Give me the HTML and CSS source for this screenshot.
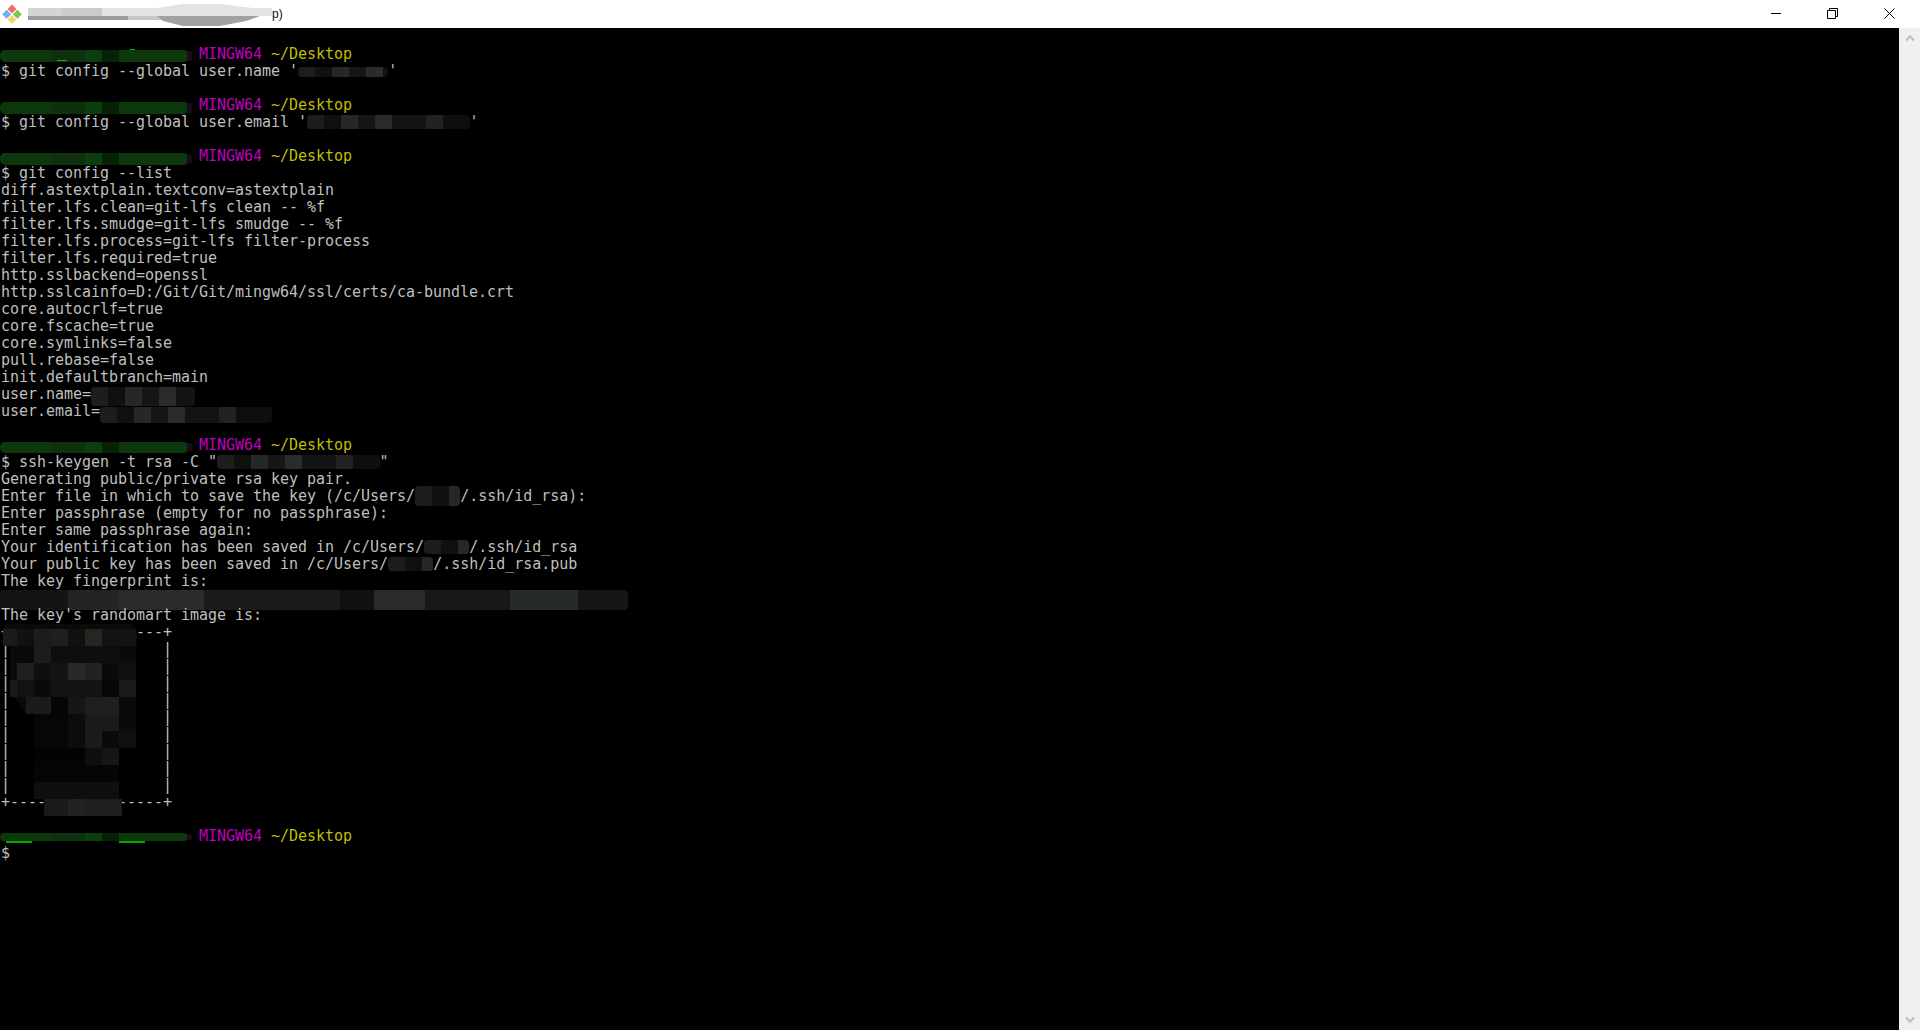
FILE: index.html
```html
<!DOCTYPE html>
<html lang="en">
<head>
<meta charset="utf-8">
<title>MINGW64</title>
<link rel="stylesheet" href="styles.css">
</head>
<body>
<div class="window">
  <header class="titlebar">
    <svg class="app-icon" viewBox="0 0 20 20" width="20" height="20">
      <path d="M10 0.5 L14.5 5 L10 9.5 L5.5 5Z" fill="#f26d6d"/>
      <path d="M4.7 5.8 L9.2 10.3 L4.7 14.8 L0.2 10.3Z" fill="#6fb1ea"/>
      <path d="M15.3 5.8 L19.8 10.3 L15.3 14.8 L10.8 10.3Z" fill="#74c655"/>
      <path d="M10 11 L14.5 15.5 L10 20 L5.5 15.5Z" fill="#f7d76a"/>
    </svg>
    <div class="title">
      <svg class="title-mask" viewBox="0 0 244 24" width="244" height="24">
        <path d="M0 6H129L155 2H192L225 6H244V14H0Z" fill="#e3e3e3"/>
        <path d="M0 6H34V14H0Z" fill="#d4d4d4"/><path d="M34 6H74V14H34Z" fill="#cccccc"/>
        <path d="M0 14H100V18H0Z" fill="#9c9c9c"/>
        <path d="M100 14H136V18H100Z" fill="#c6c6c6"/>
        <path d="M129 14H232L218 19L192 24H155L135 19Z" fill="#a2a2a2"/>
      </svg>
      <span>p)</span>
    </div>
    <div class="controls">
      <div class="ctl"><svg viewBox="0 0 10 10" width="10" height="10"><path d="M0 5.5H10" stroke="#000" fill="none"/></svg></div>
      <div class="ctl"><svg viewBox="0 0 11 11" width="11" height="11"><path d="M.5 2.5h8v8h-8zM2.5 2.5v-2h8v8h-2" stroke="#000" fill="none"/></svg></div>
      <div class="ctl"><svg viewBox="0 0 11 11" width="11" height="11"><path d="M.5.5l10 10M10.5.5l-10 10" stroke="#000" fill="none"/></svg></div>
    </div>
  </header>
  <div class="body">
    <main class="term">
      <div class="line"></div>
      <div class="line"><span class="mask-prompt p-a"></span><span class="mag">MINGW64</span> <span class="yel">~/Desktop</span></div>
      <div class="line">$ git config --global user.name '<span class="mask m-name"></span>'</div>
      <div class="line"></div>
      <div class="line"><span class="mask-prompt p-b"></span><span class="mag">MINGW64</span> <span class="yel">~/Desktop</span></div>
      <div class="line">$ git config --global user.email '<span class="mask m-email"></span>'</div>
      <div class="line"></div>
      <div class="line"><span class="mask-prompt p-b"></span><span class="mag">MINGW64</span> <span class="yel">~/Desktop</span></div>
      <div class="line">$ git config --list</div>
      <div class="line">diff.astextplain.textconv=astextplain</div>
      <div class="line">filter.lfs.clean=git-lfs clean -- %f</div>
      <div class="line">filter.lfs.smudge=git-lfs smudge -- %f</div>
      <div class="line">filter.lfs.process=git-lfs filter-process</div>
      <div class="line">filter.lfs.required=true</div>
      <div class="line">http.sslbackend=openssl</div>
      <div class="line">http.sslcainfo=D:/Git/Git/mingw64/ssl/certs/ca-bundle.crt</div>
      <div class="line">core.autocrlf=true</div>
      <div class="line">core.fscache=true</div>
      <div class="line">core.symlinks=false</div>
      <div class="line">pull.rebase=false</div>
      <div class="line">init.defaultbranch=main</div>
      <div class="line">user.name=<span class="mask m-uname"></span></div>
      <div class="line">user.email=<span class="mask m-uemail"></span></div>
      <div class="line"></div>
      <div class="line"><span class="mask-prompt p-c"></span><span class="mag">MINGW64</span> <span class="yel">~/Desktop</span></div>
      <div class="line">$ ssh-keygen -t rsa -C "<span class="mask m-mail2"></span>"</div>
      <div class="line">Generating public/private rsa key pair.</div>
      <div class="line">Enter file in which to save the key (/c/Users/<span class="mask m-user m-u1"></span>/.ssh/id_rsa):</div>
      <div class="line">Enter passphrase (empty for no passphrase):</div>
      <div class="line">Enter same passphrase again:</div>
      <div class="line">Your identification has been saved in /c/Users/<span class="mask m-user"></span>/.ssh/id_rsa</div>
      <div class="line">Your public key has been saved in /c/Users/<span class="mask m-user"></span>/.ssh/id_rsa.pub</div>
      <div class="line">The key fingerprint is:</div>
      <div class="line"><span class="mask m-fp"></span></div>
      <div class="line">The key's randomart image is:</div>
      <div class="line">+---[RSA 3072]----+</div>
      <div class="line">|           +     |</div>
      <div class="line">|          .      |</div>
      <div class="line">|   .             |</div>
      <div class="line">|   .             |</div>
      <div class="line">|                 |</div>
      <div class="line">|                 |</div>
      <div class="line">|                 |</div>
      <div class="line">|                 |</div>
      <div class="line">|                 |</div>
      <div class="line">+----[SHA256]-----+</div>
      <div class="line"></div>
      <div class="line"><span class="mask-prompt p-d"></span><span class="mag">MINGW64</span> <span class="yel">~/Desktop</span></div>
      <div class="line">$</div>
      <svg class="art-mask" viewBox="0 0 140 192" width="140" height="192" shape-rendering="crispEdges">
        <path fill="#0a0a0a" d="M6 0H134L137 5V22H136V39H136V73H136V124H119V175H122V192H44V175H34V90H26L14 73L10 56V22H3V5Z"/>
        <rect x="3" y="5" width="14" height="17" fill="#1a1c1c"/><rect x="17" y="5" width="17" height="17" fill="#111"/><rect x="34" y="5" width="17" height="17" fill="#1a1c1e"/><rect x="51" y="5" width="17" height="17" fill="#1f1f1d"/><rect x="68" y="5" width="17" height="17" fill="#111"/><rect x="85" y="5" width="17" height="17" fill="#26261f"/><rect x="102" y="5" width="34" height="17" fill="#131313"/>
        <rect x="34" y="22" width="17" height="17" fill="#1c1c1c"/><rect x="51" y="22" width="68" height="17" fill="#0e0e0e"/>
        <rect x="17" y="39" width="17" height="17" fill="#1e2020"/><rect x="34" y="39" width="17" height="17" fill="#0f0f0f"/><rect x="51" y="39" width="17" height="17" fill="#141414"/><rect x="68" y="39" width="17" height="17" fill="#272a2a"/><rect x="85" y="39" width="17" height="17" fill="#222"/><rect x="119" y="39" width="17" height="17" fill="#101010"/>
        <rect x="10" y="56" width="7" height="17" fill="#1a1a1a"/><rect x="17" y="56" width="17" height="17" fill="#141210"/><rect x="51" y="56" width="51" height="17" fill="#131313"/><rect x="102" y="56" width="17" height="17" fill="#060606"/><rect x="119" y="56" width="17" height="17" fill="#1a1c1c"/>
        <rect x="26" y="73" width="25" height="17" fill="#1a1c1c"/><rect x="51" y="73" width="17" height="17" fill="#050505"/><rect x="68" y="73" width="17" height="17" fill="#161616"/><rect x="85" y="73" width="34" height="17" fill="#1f1f1f"/>
        <rect x="34" y="90" width="51" height="17" fill="#060606"/><rect x="68" y="90" width="17" height="17" fill="#0c0c0c"/><rect x="85" y="90" width="34" height="17" fill="#1b1b1b"/>
        <rect x="34" y="107" width="34" height="17" fill="#060606"/><rect x="68" y="107" width="17" height="17" fill="#0c0c0c"/><rect x="85" y="107" width="17" height="17" fill="#1b1b1b"/><rect x="119" y="107" width="17" height="17" fill="#101010"/>
        <rect x="34" y="124" width="51" height="17" fill="#030303"/><rect x="85" y="124" width="17" height="17" fill="#0f0f0f"/><rect x="102" y="124" width="17" height="17" fill="#161616"/>
        <rect x="34" y="141" width="85" height="17" fill="#050505"/>
        <rect x="34" y="158" width="85" height="17" fill="#0f0f0f"/>
        <rect x="44" y="175" width="24" height="17" fill="#1a1a1a"/><rect x="68" y="175" width="17" height="17" fill="#222"/><rect x="85" y="175" width="37" height="17" fill="#1c1e20"/>
      </svg>
    </main>
    <aside class="scrollbar">
      <svg viewBox="0 0 10 8" width="10" height="8"><path d="M1 6.5 L5 2.5 L9 6.5" fill="none" stroke="#c0c0c0" stroke-width="2.4"/></svg>
      <svg viewBox="0 0 10 8" width="10" height="8"><path d="M1 1.5 L5 5.5 L9 1.5" fill="none" stroke="#c0c0c0" stroke-width="2.4"/></svg>
    </aside>
  </div>
</div>
</body>
</html>
```
FILE: styles.css
```css
html, body { margin: 0; height: 100%; overflow: hidden; background: #000; }
.window { display: flex; flex-direction: column; height: 1030px; width: 1920px; }
.titlebar { flex: 0 0 28px; background: #fff; display: flex; align-items: center; padding-left: 2px; box-sizing: border-box; }
.app-icon { flex: none; margin-right: 6px; }
.title { flex: 1; display: flex; align-items: center; font: 12px "Liberation Sans", sans-serif; color: #111; }
.controls { display: flex; align-items: center; padding-right: 2px; }
.ctl { width: 57px; height: 28px; padding-bottom: 2px; box-sizing: border-box; display: flex; align-items: center; justify-content: center; }
.body { flex: 1; display: flex; min-height: 0; }
.term { position: relative; flex: 1; background: #000; color: #bfbfbf; font: 15px/17px "DejaVu Sans Mono", monospace; letter-spacing: -0.03px; overflow: hidden; padding: 1px 0 0 1px; box-sizing: border-box; }
.line { height: 17px; white-space: pre; }
.mag { color: #bf00bf; }
.yel { color: #bfbf00; }
.mask-prompt { position: relative; display: inline-block; vertical-align: top; width: 187px; margin-left: -1px; margin-right: 12px; border-radius: 5px 3px 3px 5px; background: linear-gradient(90deg, #0c380c 0 51px, #0f300f 51px 85px, #0c3d0c 85px 102px, #062206 102px 119px, #0c380c 119px 187px); box-shadow: 6px 0 0 -1px #1a0a1a; }
.p-a { height: 12px; margin-top: 4px; }
.p-b { height: 12px; margin-top: 5px; }
.p-c { height: 11px; margin-top: 5px; }
.p-d { height: 8px; margin-top: 5px; }
.p-a::after { content: ""; position: absolute; left: 130px; top: -1px; width: 5px; height: 1px; background: #00bf00; box-shadow: -73px 11px 0 0 #00bf00, -68px 11px 0 0 #00bf00; }
.p-d::after { content: ""; position: absolute; left: 119px; top: 8px; width: 26px; height: 2px; background: #00a800; box-shadow: -113px 0 0 -0 #00a800; }
.mask { display: inline-block; vertical-align: top; height: 14px; margin-top: 1px; border-radius: 4px; background: linear-gradient(90deg, #1c1e1e 0 17px, #101010 17px 34px, #262828 34px 51px, #161616 51px 68px, #2a2c2c 68px 85px, #131313 85px 119px, #222 119px 136px, #0e0e0e 136px); }
.m-name { width: 10ch; height: 10px; margin-top: 4px; }
.m-email { width: 18ch; }
.m-uname { width: 104px; height: 19px; margin-top: 1px; }
.m-uemail { width: 172px; height: 16px; margin-top: 4px; }
.m-mail2 { width: 18ch; }
.m-user { width: 5ch; }
.m-u1 { height: 20px; margin-top: -2px; }
.m-fp { width: 628px; height: 20px; margin-left: -1px; margin-top: 0; background: linear-gradient(90deg, #141414 0 68px, #242424 68px 119px, #2a2c2c 119px 204px, #1a1a1a 204px 340px, #111 340px 374px, #2a2a2a 374px 425px, #181818 425px 510px, #252a2a 510px 578px, #161616 578px); }
.art-mask { position: absolute; left: 0; top: 596px; }
.scrollbar { flex: 0 0 21px; background: #f0f0f0; display: flex; flex-direction: column; align-items: center; justify-content: space-between; padding: 6px 0 6px; box-sizing: border-box; }
```
